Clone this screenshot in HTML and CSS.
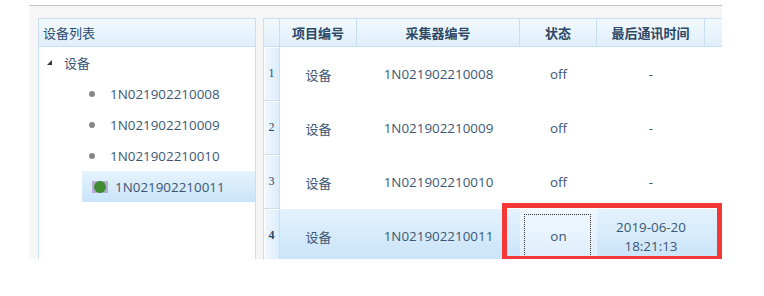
FILE: index.html
```html
<!DOCTYPE html>
<html lang="zh-CN">
<head>
<meta charset="utf-8">
<title>设备列表</title>
<link rel="stylesheet" href="styles.css">
</head>
<body>
<div class="frame">
  <div class="tree-panel">
    <div class="panel-head">设备列表</div>
    <div class="tree">
      <div class="tree-root"><span class="caret"></span><span class="label">设备</span></div>
      <div class="tree-item"><span class="dot"></span><span class="num">1N021902210008</span></div>
      <div class="tree-item"><span class="dot"></span><span class="num">1N021902210009</span></div>
      <div class="tree-item"><span class="dot"></span><span class="num">1N021902210010</span></div>
      <div class="tree-item selected"><span class="online"><span class="online-dot"></span></span><span class="num">1N021902210011</span></div>
    </div>
  </div>
  <div class="grid-panel">
    <div class="grid">
      <div class="hcell"></div>
      <div class="hcell">项目编号</div>
      <div class="hcell">采集器编号</div>
      <div class="hcell">状态</div>
      <div class="hcell">最后通讯时间</div>
      <div class="hcell"></div>

      <div class="rn">1</div>
      <div class="cell">设备</div>
      <div class="cell num">1N021902210008</div>
      <div class="cell num">off</div>
      <div class="cell num">-</div>
      <div class="cell"></div>

      <div class="rn">2</div>
      <div class="cell">设备</div>
      <div class="cell num">1N021902210009</div>
      <div class="cell num">off</div>
      <div class="cell num">-</div>
      <div class="cell"></div>

      <div class="rn">3</div>
      <div class="cell">设备</div>
      <div class="cell num">1N021902210010</div>
      <div class="cell num">off</div>
      <div class="cell num">-</div>
      <div class="cell"></div>

      <div class="rn sel">4</div>
      <div class="cell sel">设备</div>
      <div class="cell num sel">1N021902210011</div>
      <div class="cell num sel focus"><span class="focus-ring"></span>on</div>
      <div class="cell num sel time">2019-06-20<br>18:21:13</div>
      <div class="cell sel"></div>
    </div>
  </div>
  <div class="highlight"></div>
</div>
</body>
</html>
```
FILE: styles.css
```css
html, body {
  margin: 0;
  padding: 0;
  background: #ffffff;
}

body {
  font-family: "Open Sans", "Noto Sans CJK SC", sans-serif;
  font-size: 13px;
  color: #3b5775;
}

.frame {
  position: relative;
  box-sizing: border-box;
  margin: 5px 0 0 29px;
  width: 693px;
  height: 254px;
  border-top: 1px solid #c4c4c4;
  background: #f6f6f6;
  padding: 12px 0 0 9px;
  display: flex;
  gap: 7px;
  overflow: hidden;
}

/* ---------- left tree panel ---------- */
.tree-panel {
  box-sizing: border-box;
  width: 218px;
  flex: none;
  background: #ffffff;
  border: 1px solid #c7def3;
  border-bottom: none;
}

.panel-head {
  box-sizing: border-box;
  height: 28px;
  line-height: 27px;
  padding-left: 4px;
  border-bottom: 1px solid #c7def3;
  background: linear-gradient(#f2f9fe, #e0effb);
  font-family: "Noto Sans CJK SC", sans-serif;
  font-size: 13px;
  color: #2f4d6d;
}

.tree-root,
.tree-item {
  display: flex;
  align-items: center;
  height: 31px;
}

.tree-root {
  padding-left: 8px;
}

.caret {
  width: 0;
  height: 0;
  border-left: 5px solid transparent;
  border-bottom: 5px solid #333333;
  margin-right: 12px;
}

.label {
  font-family: "Noto Sans CJK SC", sans-serif;
  color: #3b5775;
}

.tree-item {
  margin-left: 43px;
  padding-left: 7px;
}

.dot {
  width: 6px;
  height: 6px;
  border-radius: 50%;
  background: #878787;
  margin-right: 15px;
}

.num {
  font-family: "Open Sans", sans-serif;
  font-size: 13.4px;
}

.tree-item.selected {
  padding-left: 10px;
  background: linear-gradient(#e6f3fd, #c9e4fa);
}

.online {
  display: flex;
  align-items: center;
  justify-content: center;
  width: 16px;
  height: 12px;
  background: #b8aed4;
  margin-right: 7px;
}

.online-dot {
  width: 12px;
  height: 12px;
  border-radius: 50%;
  background: #3e8d33;
}

/* ---------- right grid panel ---------- */
.grid-panel {
  flex: 1;
  min-width: 0;
  background: #ffffff;
  border-left: 1px solid #c7def3;
  border-top: 1px solid #c7def3;
}

.grid {
  display: grid;
  grid-template-columns: 16px 77px 163px 77px 108px 80px;
  grid-template-rows: 28px 54px 54px 54px 54px;
}

.hcell {
  box-sizing: border-box;
  display: flex;
  align-items: center;
  justify-content: center;
  border-right: 1px solid #c7def3;
  border-bottom: 1px solid #c7def3;
  background: linear-gradient(#f2f9fe, #e0effb);
  font-family: "Noto Sans CJK SC", sans-serif;
  font-weight: bold;
  font-size: 13px;
  color: #2d4764;
}

.rn {
  box-sizing: border-box;
  display: flex;
  align-items: center;
  justify-content: center;
  border-right: 1px solid #c7def3;
  border-bottom: 1px solid #c7def3;
  box-shadow: inset 1px 1px 0 #ffffff;
  background: linear-gradient(90deg, #f1f8fe, #dcedfb);
  font-family: "Liberation Serif", serif;
  font-size: 12px;
  color: #2d4764;
}

.rn.sel {
  font-weight: bold;
}

.cell {
  display: flex;
  align-items: center;
  justify-content: center;
  text-align: center;
  font-family: "Open Sans", "Noto Sans CJK SC", sans-serif;
}

.cell.sel {
  background: linear-gradient(#e4f2fd, #c8e3f9);
}

.cell.time {
  line-height: 19px;
  padding-top: 2px;
}

.cell.focus {
  position: relative;
  background: linear-gradient(#f1f8fe, #dcedfb);
}

.focus-ring {
  position: absolute;
  left: 4px;
  right: 6px;
  top: 5px;
  bottom: -4px;
  border: 1px dotted #333333;
}

.highlight {
  position: absolute;
  left: 473px;
  top: 197px;
  width: 220px;
  height: 56px;
  box-sizing: border-box;
  border: 5px solid #f43838;
  border-bottom-width: 3px;
}
```
